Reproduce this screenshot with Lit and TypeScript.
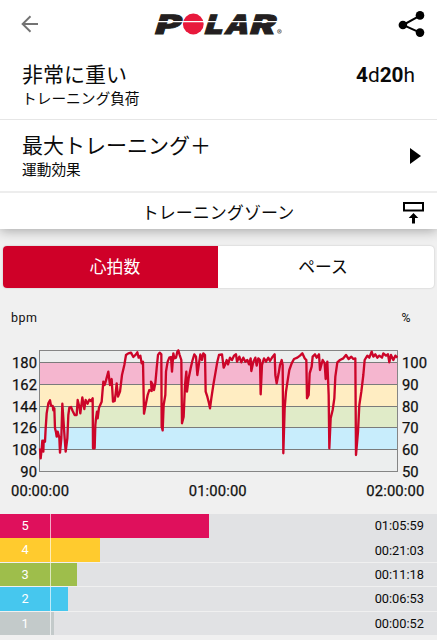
import { LitElement, html, svg, css } from "lit";
import { customElement } from "lit/decorators.js";

const TRACE =
  "120,340 122,370 125,342 127,317 130,350 131,317 135,320 137,280 140,235 145,205 150,196 153,212 158,213 160,226 163,220 165,280 168,292 170,305 173,290 178,308 180,353 184,310 187,206 190,250 194,310 197,350 202,310 205,240 208,218 213,216 218,228 224,240 230,240 233,195 238,215 241,235 247,187 253,222 257,195 263,206 268,194 273,198 278,190 279,340 284,340 286,270 288,250 291,230 293,250 297,218 305,200 310,140 314,150 318,136 325,110 330,150 335,132 339,200 344,198 347,175 350,145 354,185 360,170 366,120 373,90 378,60 385,55 393,53 400,66 408,58 412,52 416,68 421,62 425,85 429,80 432,236 438,205 443,180 448,165 455,168 453,140 458,148 462,165 466,145 470,100 474,60 479,53 484,58 485,275 488,286 491,210 496,180 498,110 503,80 508,68 513,66 516,110 520,55 523,70 528,68 532,50 535,46 539,60 544,75 546,265 551,245 555,150 559,110 561,170 566,130 572,100 577,78 583,58 588,65 592,120 597,85 601,58 606,75 610,55 615,60 617,170 622,185 627,205 630,220 634,190 640,150 646,115 652,80 657,60 666,58 671,98 675,90 680,75 684,88 690,68 696,75 702,62 708,58 711,80 718,65 724,82 730,68 736,80 742,75 747,88 752,70 754,108 760,80 766,68 770,92 775,70 780,75 782,178 786,90 792,70 798,80 805,68 810,78 818,65 824,58 826,120 830,145 836,115 840,90 845,75 848,90 850,355 854,220 858,170 864,130 868,105 875,85 882,72 892,68 900,62 907,55 914,70 919,75 921,190 926,180 929,115 935,95 938,65 945,58 950,68 957,58 960,105 968,75 974,85 977,132 982,80 986,180 988,340 992,250 998,225 1003,190 1006,125 1012,82 1020,75 1030,70 1038,60 1046,72 1054,65 1060,72 1066,70 1068,360 1074,290 1078,210 1084,170 1090,120 1094,75 1102,62 1108,68 1115,50 1120,65 1126,58 1132,68 1138,62 1146,68 1150,55 1158,62 1164,58 1168,82 1173,60 1180,75 1186,62 1192,68";

const LINES = [362.5, 384.5, 406.5, 427.5, 449.5, 471.5];
const BPM = [180, 162, 144, 126, 108, 90];
const PERCENT = [100, 90, 80, 70, 60, 50];
const BANDS = ["#f5b6cf", "#ffedc2", "#e0ebc8", "#c8edfc", "#eceeee"];

const ZONES = [
  { n: 5, time: "01:05:59", width: 209, color: "#df105c" },
  { n: 4, time: "00:21:03", width: 100, color: "#ffcb2e" },
  { n: 3, time: "00:11:18", width: 77, color: "#9ebe4b" },
  { n: 2, time: "00:06:53", width: 68, color: "#46c7ee" },
  { n: 1, time: "00:00:52", width: 54, color: "#c3caca" },
];

@customElement("polar-header")
class PolarHeader extends LitElement {
  static styles = css`
    :host { display: block; }
    svg { display: block; }
    .brand { font-family: Inter, "Liberation Sans", sans-serif; font-weight: 900; font-size: 26.5px; fill: #231f20; stroke: #231f20; stroke-width: 0.9; }
    .mark { font-family: Roboto, sans-serif; font-size: 4px; fill: #333; }
  `;
  render() {
    const letters: [string, number, number][] = [["P", 153.6, 25.5], ["L", 203.2, 18.5], ["A", 223.6, 24], ["R", 248.4, 25]];
    return html`<svg width="437" height="48" viewBox="0 0 437 48">
      <path d="M38 24H22.5M30.5 16.3L22.6 24L30.5 31.8" fill="none" stroke="#737373" stroke-width="1.9" />
      ${letters.map(([c, x, w]) => svg`<text class="brand" transform=${`translate(${x} 33.5) skewX(-17)`} textLength=${w} lengthAdjust="spacingAndGlyphs">${c}</text>`)}
      <circle cx="193.3" cy="24" r="10.4" fill="#e8193c" />
      <path d="M155 21.6H277" stroke="#fff" stroke-width="1.4" />
      <circle cx="279.4" cy="31.4" r="2" fill="none" stroke="#555" stroke-width=".6" />
      <text class="mark" x="278.2" y="32.9">R</text>
      <path d="M420 15.6L403 25L420 32.6" fill="none" stroke="#000" stroke-width="2" />
      <circle cx="420" cy="15.4" r="4.3" /><circle cx="402.9" cy="25" r="4.3" /><circle cx="420" cy="32.6" r="4.3" />
    </svg>`;
  }
}

@customElement("heart-chart")
class HeartChart extends LitElement {
  static styles = css`
    :host { display: block; }
    svg { display: block; font-family: Roboto, sans-serif; fill: #111; }
    .unit { font-size: 12.5px; }
    .axis { font-size: 14.8px; stroke: #111; stroke-width: 0.25; }
    .end { text-anchor: end; }
    .mid { text-anchor: middle; }
  `;
  render() {
    return html`<svg width="437" height="209" viewBox="0 305 437 209">
      <text class="unit" x="11" y="322" textLength="26">bpm</text>
      <text class="unit" x="401.5" y="322" textLength="9" lengthAdjust="spacingAndGlyphs">%</text>
      <rect x="39.5" y="350.5" width="358" height="12" fill="#eceeee" />
      ${BANDS.map((c, i) => svg`<rect x="39.5" y=${LINES[i]} width="358" height=${LINES[i + 1] - LINES[i]} fill=${c} />`)}
      ${LINES.map((y, i) => svg`
        <path d=${`M39.5 ${y}H397.5`} stroke="#7b7b7b" />
        <text class="axis end" x="37" y=${y + 5.4}>${BPM[i]}</text>
        <text class="axis" x="402" y=${y + 5.4}>${PERCENT[i]}</text>`)}
      <rect x="39.5" y="350.5" width="358" height="121" fill="none" stroke="#858585" />
      <polyline points=${TRACE} transform="translate(0 335) scale(.33333)" fill="none" stroke="#cc0529" stroke-width="7" stroke-linejoin="round" />
      <text class="axis" x="11" y="496" textLength="58">00:00:00</text>
      <text class="axis mid" x="217.7" y="496" textLength="58">01:00:00</text>
      <text class="axis" x="366.3" y="496" textLength="58">02:00:00</text>
    </svg>`;
  }
}

@customElement("app-root")
class AppRoot extends LitElement {
  static styles = css`
    :host {
      display: block; width: 437px; height: 640px; overflow: hidden; background: #f0f0f0; color: #0a0a0a;
      font-family: Roboto, "Noto Sans CJK JP", sans-serif;
    }
    * { box-sizing: border-box; }
    .top { background: #fff; box-shadow: 0 2px 11px rgba(0, 0, 0, 0.3); height: 229px; }
    .row { display: flex; justify-content: space-between; padding: 0 22px; }
    .load { height: 72px; border-bottom: 1px solid #e6e6e6; padding-top: 13px; }
    .benefit { height: 73px; border-bottom: 2px solid #ededed; padding: 12px 16px 0 22px; }
    .title { font-size: 21px; line-height: 28px; white-space: nowrap; }
    .sub { font-size: 14.7px; line-height: 20px; }
    .time { font-size: 20.8px; line-height: 28px; }
    .arrow { width: 11px; height: 16px; margin-top: 16px; }
    .section { height: 36px; display: grid; grid-template-columns: 1fr 200px 1fr; align-items: center; padding: 0 13px 0 12px; font-size: 17px; text-align: center; white-space: nowrap; }
    .collapse { grid-column: 3; justify-self: end; display: block; margin-top: 3px; }
    .name { grid-column: 2; }
    .tabs { display: grid; grid-template-columns: 215px 1fr; margin: 17px 3px; height: 42px; border-radius: 4px; overflow: hidden; background: #fff; box-shadow: 0 0 2px rgba(0, 0, 0, 0.22); position: relative; }
    .tab { line-height: 43px; font-size: 16.8px; text-align: center; padding-right: 6px; }
    .active { background: #cf0028; color: #fff; padding: 0 0 0 9px; }
    .zones { display: grid; grid-auto-rows: 23.6px; row-gap: 0.8px; }
    .zone { display: flex; justify-content: space-between; align-items: center; background: #e1e2e4; padding-right: 13px; }
    .bar { height: 100%; display: flex; color: #fff; line-height: 24px; font-size: 12.8px; }
    .num { width: 51px; text-align: center; border-right: 1px solid rgba(255, 255, 255, 0.65); }
    .dur { font-size: 12.8px; }
  `;
  render() {
    return html`
      <div class="top">
        <polar-header></polar-header>
        <div class="row load">
          <div><div class="title">非常に重い</div><div class="sub">トレーニング負荷</div></div>
          <div class="time"><b>4</b>d<b>20</b>h</div>
        </div>
        <div class="row benefit">
          <div><div class="title">最大トレーニング＋</div><div class="sub">運動効果</div></div>
          <svg class="arrow" viewBox="0 0 11 16"><path d="M0 0L11 8L0 16Z" /></svg>
        </div>
        <div class="section">
          <span class="name">トレーニングゾーン</span>
          <svg class="collapse" width="21" height="22" viewBox="0 0 21 22">
            <rect x="1" y="1" width="19" height="7.5" fill="none" stroke="#000" stroke-width="2" />
            <path d="M10.5 11L15.3 16H12V21.5H9V16H5.7Z" />
          </svg>
        </div>
      </div>
      <div class="tabs"><div class="tab active">心拍数</div><div class="tab">ペース</div></div>
      <heart-chart></heart-chart>
      <div class="zones">
        ${ZONES.map((z) => html`<div class="zone">
          <div class="bar" style=${`width:${z.width}px;background:${z.color}`}><span class="num">${z.n}</span></div>
          <span class="dur">${z.time}</span>
        </div>`)}
      </div>`;
  }
}
